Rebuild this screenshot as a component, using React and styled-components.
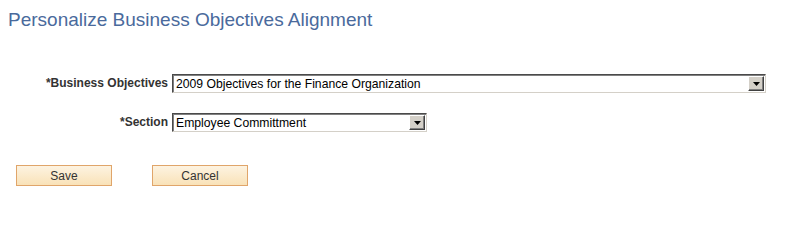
import styled, { createGlobalStyle } from 'styled-components';

const Global = createGlobalStyle`
  body {
    margin: 0;
    background: #fff;
    font-family: 'Liberation Sans', Arial, sans-serif;
  }
`;

const Page = styled.div`
  width: 792px;
  height: 200px;
  padding: 10px 0 0 8px;
  box-sizing: border-box;
`;

const Title = styled.h1`
  margin: 0;
  font-size: 19px;
  font-weight: normal;
  line-height: 20px;
  color: #4a6a9c;
`;

const Form = styled.div`
  display: grid;
  grid-template-columns: 160px auto;
  column-gap: 4px;
  row-gap: 20px;
  margin-top: 44px;
  align-items: start;
`;

const Label = styled.label`
  text-align: right;
  font-size: 12px;
  font-weight: bold;
  color: #333;
  line-height: 16px;
  padding-top: 1px;
`;

const SelectBox = styled.div`
  width: ${p => p.$width}px;
  height: 19px;
  box-sizing: border-box;
  display: flex;
  align-items: center;
  border-top: 1px solid #4a4a4a;
  border-left: 1px solid #4a4a4a;
  border-right: 1px solid #d4d0c8;
  border-bottom: 1px solid #d4d0c8;
  box-shadow: inset 1px 1px 0 #808080;
  background: #fff;
`;

const SelectText = styled.span`
  flex: 1;
  padding-left: 3px;
  font-size: 12.2px;
  color: #000;
  white-space: nowrap;
  overflow: hidden;
`;

const ArrowButton = styled.span`
  width: 16px;
  height: 15px;
  margin-right: 1px;
  box-sizing: border-box;
  background: #d4d0c8;
  border-top: 1px solid #fff;
  border-left: 1px solid #fff;
  border-right: 1px solid #404040;
  border-bottom: 1px solid #404040;
  box-shadow: inset -1px -1px 0 #808080;
  display: flex;
  align-items: center;
  justify-content: center;
`;

const Buttons = styled.div`
  display: flex;
  gap: 40px;
  margin-top: 33px;
  padding-left: 8px;
`;

const Button = styled.button`
  width: 96px;
  height: 21px;
  box-sizing: border-box;
  border: 1px solid #e0a56a;
  background: linear-gradient(#fdf3e1, #f9e2b8);
  font-family: 'Liberation Sans', Arial, sans-serif;
  font-size: 12px;
  color: #333;
  padding: 0;
`;

const Select = ({ value, width }) => (
  <SelectBox $width={width}>
    <SelectText>{value}</SelectText>
    <ArrowButton>
      <svg width="7" height="4" viewBox="0 0 7 4">
        <path d="M0 0h7L3.5 4z" fill="#000" />
      </svg>
    </ArrowButton>
  </SelectBox>
);

const App = () => (
  <Page>
    <Global />
    <Title>Personalize Business Objectives Alignment</Title>
    <Form>
      <Label>*Business Objectives</Label>
      <Select value="2009 Objectives for the Finance Organization" width={594} />
      <Label>*Section</Label>
      <Select value="Employee Committment" width={255} />
    </Form>
    <Buttons>
      <Button>Save</Button>
      <Button>Cancel</Button>
    </Buttons>
  </Page>
);

export default App;
